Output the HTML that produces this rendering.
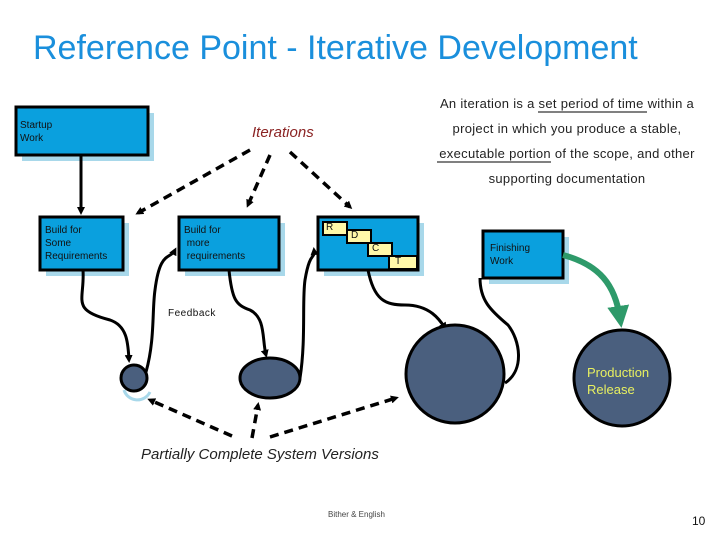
<!DOCTYPE html>
<html><head><style>
body{margin:0;width:720px;height:540px;background:#fff;position:relative;overflow:hidden;font-family:"Liberation Sans",Arial,sans-serif}
.t{position:absolute;white-space:nowrap}
</style></head><body>
<svg width="720" height="540" style="position:absolute;left:0;top:0">
<defs>
<marker id="a" markerWidth="8" markerHeight="8" refX="5" refY="4" orient="auto" markerUnits="userSpaceOnUse"><path d="M0,0 L8,4 L0,8 z" fill="#000"/></marker>
<marker id="g" markerWidth="22" markerHeight="22" refX="12" refY="11" orient="auto" markerUnits="userSpaceOnUse"><path d="M0,0 L22,11 L0,22 z" fill="#2e9a6a"/></marker>
</defs>
<g fill="#a8d8ea">
<rect x="22" y="113" width="132" height="48"/>
<rect x="46" y="223" width="83" height="53"/>
<rect x="185" y="223" width="100" height="53"/>
<rect x="324" y="223" width="100" height="53"/>
<rect x="489" y="237" width="80" height="47"/>
</g>
<g fill="#0aa0de" stroke="#000" stroke-width="3">
<rect x="16" y="107" width="132" height="48"/>
<rect x="40" y="217" width="83" height="53"/>
<rect x="179" y="217" width="100" height="53"/>
<rect x="318" y="217" width="100" height="53"/>
<rect x="483" y="231" width="80" height="47"/>
</g>
<g fill="#fff8a8" stroke="#000" stroke-width="2">
<rect x="323" y="222" width="24" height="13"/>
<rect x="347" y="230" width="24" height="13"/>
<rect x="368" y="243" width="24" height="13"/>
<rect x="389" y="256" width="28" height="13"/>
</g>
<g stroke="#000" stroke-width="3" fill="none">
<line x1="81" y1="155" x2="81" y2="212" marker-end="url(#a)"/>
<path d="M83,270 C85,300 70,310 110,320 C128,326 128,345 129,360" marker-end="url(#a)"/>
<path d="M146,372 C155,340 152,310 155,290 C160,250 170,260 175,250" marker-end="url(#a)"/>
<path d="M229,270 C232,300 236,305 250,310 C266,318 262,340 266,355" marker-end="url(#a)"/>
<path d="M300,378 C306,340 302,300 305,280 C310,250 315,260 314,250" marker-end="url(#a)"/>
<path d="M368,270 C374,300 385,305 405,305 C430,305 440,320 445,328" marker-end="url(#a)"/>
<path d="M505,383 C525,370 520,340 508,325 C490,310 480,300 480,278"/>
</g>
<path d="M563,255 C600,265 615,285 620,318" stroke="#2e9a6a" stroke-width="6" fill="none" marker-end="url(#g)"/>
<g fill="#4a5f7e" stroke="#000" stroke-width="3">
<circle cx="134" cy="378" r="13"/>
<ellipse cx="270" cy="378" rx="30" ry="20"/>
<circle cx="455" cy="374" r="49"/>
<circle cx="622" cy="378" r="48"/>
</g>
<path d="M124,390 A14,14 0 0 0 150,392" stroke="#a8d8ea" stroke-width="3" fill="none"/>
<g stroke="#000" stroke-width="3.5" stroke-dasharray="9,6" fill="none">
<path d="M250,150 L138,213" marker-end="url(#a)"/>
<path d="M270,155 L248,205" marker-end="url(#a)"/>
<path d="M290,152 L350,207" marker-end="url(#a)"/>
<path d="M232,436 L150,400" marker-end="url(#a)"/>
<path d="M252,438 L258,405" marker-end="url(#a)"/>
<path d="M270,437 L396,398" marker-end="url(#a)"/>
</g>
<g stroke="#000" stroke-width="1">
<line x1="538" y1="112" x2="647" y2="112"/>
<line x1="437" y1="162" x2="551" y2="162"/>
</g>
</svg>
<div class="t" style="left:33px;top:29px;font-size:34px;color:#1a8fdc">Reference Point - Iterative Development</div>
<div class="t" style="left:567px;top:96px;font-size:13px;letter-spacing:0.3px;color:#222;transform:translateX(-50%)">An iteration is a set period of time within a</div>
<div class="t" style="left:567px;top:121px;font-size:13px;letter-spacing:0.3px;color:#222;transform:translateX(-50%)">project in which you produce a stable,</div>
<div class="t" style="left:567px;top:146px;font-size:13px;letter-spacing:0.3px;color:#222;transform:translateX(-50%)">executable portion of the scope, and other</div>
<div class="t" style="left:567px;top:171px;font-size:13px;letter-spacing:0.3px;color:#222;transform:translateX(-50%)">supporting documentation</div>
<div class="t" style="left:252px;top:124px;font-size:15px;font-style:italic;color:#8b2323">Iterations</div>
<div class="t" style="left:20px;top:119px;font-size:10px;line-height:13px;color:#111">Startup<br>Work</div>
<div class="t" style="left:45px;top:224px;font-size:10px;line-height:13px;color:#111">Build for<br>Some<br>Requirements</div>
<div class="t" style="left:184px;top:224px;font-size:10px;line-height:13px;color:#111">Build for<br>&nbsp;more<br>&nbsp;requirements</div>
<div class="t" style="left:326px;top:222px;font-size:10px;color:#111">R</div>
<div class="t" style="left:351px;top:230px;font-size:10px;color:#111">D</div>
<div class="t" style="left:372px;top:243px;font-size:10px;color:#111">C</div>
<div class="t" style="left:395px;top:256px;font-size:10px;color:#111">T</div>
<div class="t" style="left:490px;top:242px;font-size:10px;line-height:13px;color:#111">Finishing<br>Work</div>
<div class="t" style="left:168px;top:308px;font-size:10px;letter-spacing:0.5px;color:#111">Feedback</div>
<div class="t" style="left:587px;top:364px;font-size:13px;line-height:17px;color:#e8f060">Production<br>Release</div>
<div class="t" style="left:141px;top:446px;font-size:15px;font-style:italic;color:#222">Partially Complete System Versions</div>
<div class="t" style="left:328px;top:510px;font-size:8px;color:#444">Bither &amp; English</div>
<div class="t" style="left:692px;top:514px;font-size:12px;color:#111">10</div>
</body></html>
